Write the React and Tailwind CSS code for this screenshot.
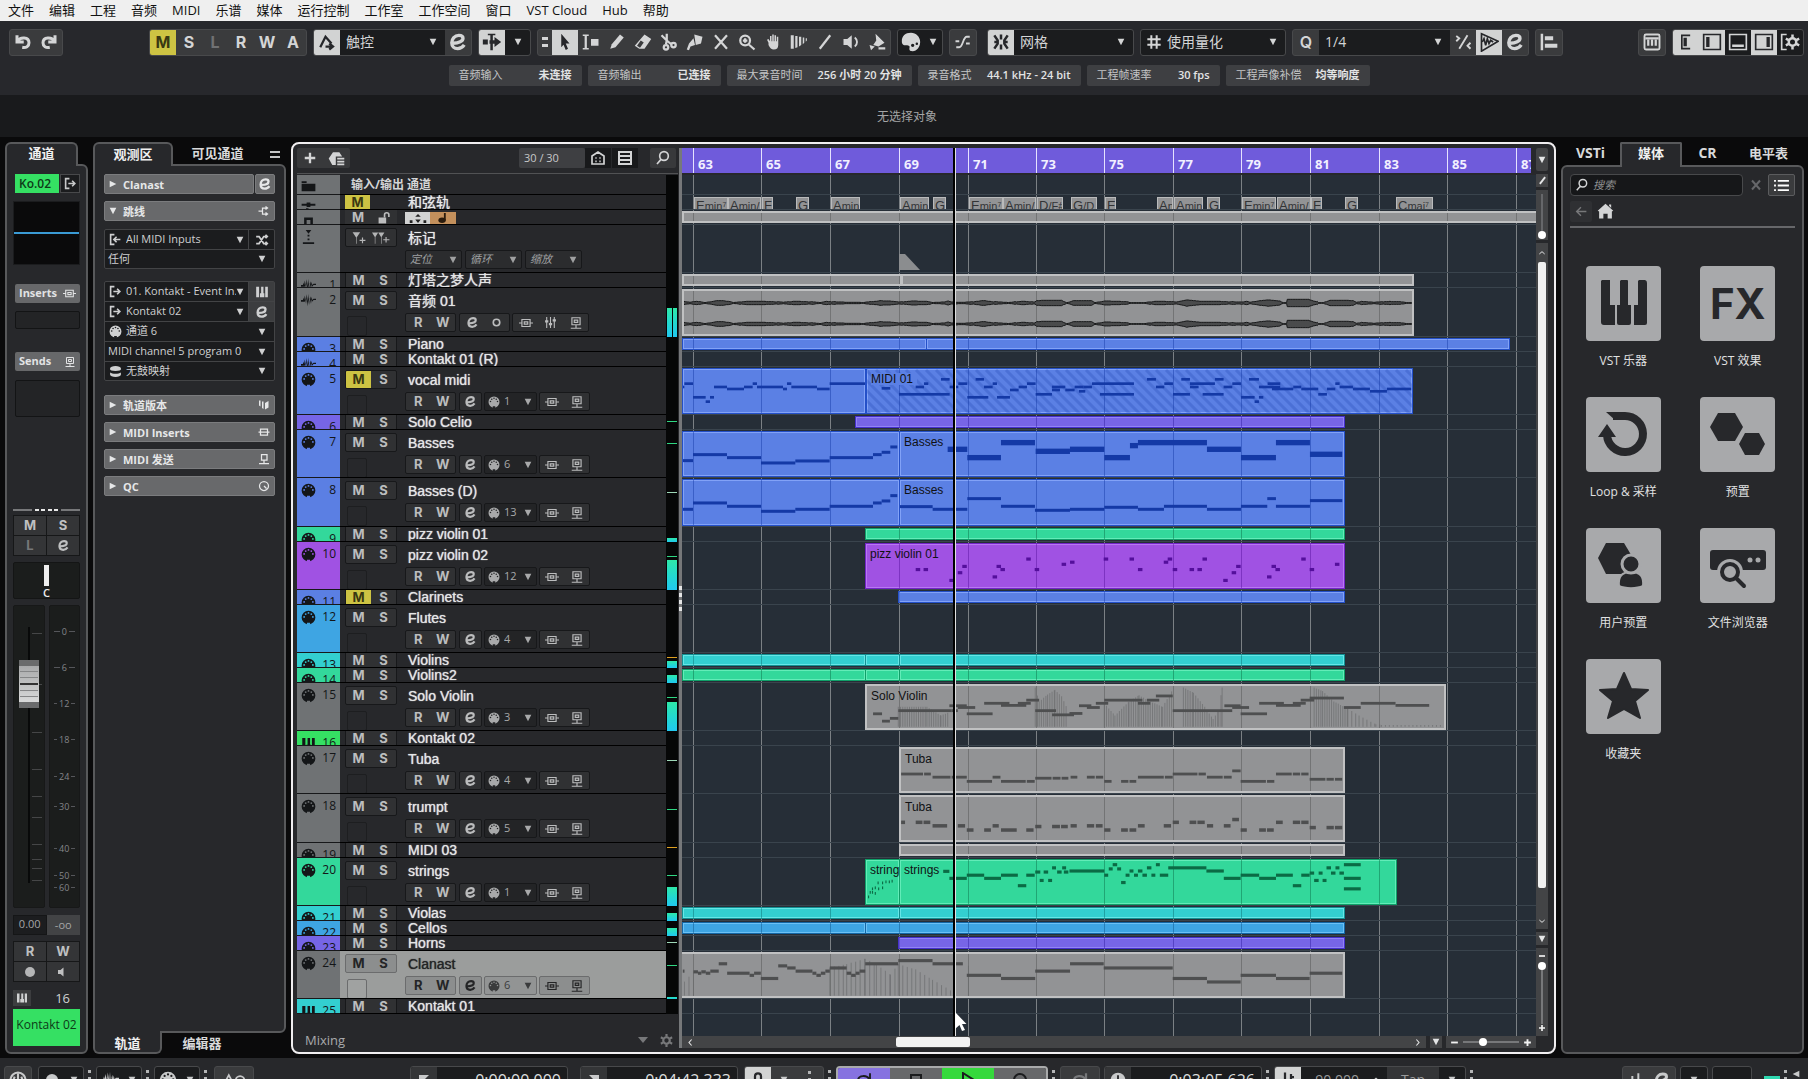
import React from "react";

/* ---------- icons ---------- */
const dot = (cx, cy, r) => `M${cx - r} ${cy}a${r} ${r} 0 1 0 ${2 * r} 0a${r} ${r} 0 1 0 ${-2 * r} 0z`;
const MIDI = dot(12, 12, 11) + [[5, 11], [7.5, 6.5], [12, 4.6], [16.5, 6.5], [19, 11]].map((p) => dot(p[0], p[1], 1.5)).join("") + "M9.5 23v-2.500h5v2.500z";

const fills = {
  midi: MIDI,
  piano: "M3 3h5v10h2v8H3zM11 3h3v10h-3zM10.800 14h3.600v7h-3.600zM16 3h5v18h-5.600v-8H16z",
  keys: "M2 3h5v18H2zM8.500 14h2V3h4v11h1.500v7H8.500zM17.500 3H22v18h-4.500z",
  folder: "M1 5h8v3H1zM1 9h22v12H1z",
  play: "M6 3l15 9-15 9z",
  cursor: "M7 1l11 13h-5l3 7-3 1.500-3-7-3 3.500z",
  pencil: "M3 21l2-6L16 2l5 4L10 19z",
  eraser: "M14 2l9 6-9 13H7l-6-4zM9 10l-5 7 4 2.500 5-7z",
  hand: "M6 13L4 9l2-1 2 3V4h2v7h1V2h2v9h1V3h2v8h1V5h2v11c0 4-2 6-6 6-3 0-5-2-7-6z",
  comp: "M1 3h4v18H1zM7 4h3v15l-3 1zM12 5h3v11l-3 2zM17 6h2v7l-2 2zM21 7h1.500v3L21 11.500z",
  bucket: "M10 1l12 12-8 5-7-2 4-6zM2 16l7 2-5 5zM14 19h9v3h-9z",
  glue: "M11 2l11 3-2 9-7 2zM10 7l2 9-6 2-2 5-3-1 3-8z",
  palette: "M12 1C5 1 1 5 1 11c0 4 2 5 5 5 4 0 5 1 4 4 0 2 1 3 4 3 5 0 9-5 9-11S18 1 12 1z" + dot(14, 16, 2) + dot(19, 14, 1.5),
  hex: "M7 2h10l6 10-6 10H7L1 12z",
  hexlist: "M7 3h9l4 6h-9v12H6L1 12zM13 11h10v2.500H13zM13 15h10v2.500H13zM13 19h10v2.500H13z",
  home: "M12 1l11 10-2 1v10h-6v-7H9v7H3V12l-2-1zM17 2h3v5l-3-3z",
  wave: "M0 11h3l1-4 1 4 1-7 2 9 1-11 2 11 1-12 1 13 2-9 1 6 1-5 1 5 2-2h4v2h-4l-2 3-1-4-1 7-2-8-1 10-1-9-1 11-2-12-1 8-1-6-1 3H0z",
  tempo: "M1 6h8v3H1zM15 6h8v3h-8zM9 4h6v7H9zM1 15h22v3H1zM8 13h4v7H8z",
  signature: "M5 4h14v17h-4V8H9v13H5z",
  drum: "M2 6a10 4 0 0 1 20 0v2a10 3 0 0 1-20 0zM2 14c4 3 16 3 20 0v4a10 4 0 0 1-20 0z",
  speaker: "M2 8h5l6-5v18l-6-5H2z",
  versions: "M2 3h3v12l-3-2zM8 5h3v15l-3-2zM14 8l7-4v13l-7 4z",
  fader: "M4 2h2v6h2v4H6v10H4V12H2V8h2zM11 2h2v11h2v4h-2v5h-2v-5H9v-4h2zM18 2h2v4h2v4h-2v12h-2V10h-2V6h2z",
};
const strokes = {
  undo: "M4 3v9h9M5 11C8 5 20 5 20 13c0 5-4 7-9 6",
  redo: "M20 3v9h-9M19 11C16 5 4 5 4 13c0 5 4 7 9 6",
  e: "M6 13.500C13 13.500 18 11 18 7.500 18 5 15.500 4 13 4 8 4 4.500 8 4.500 13c0 4.500 3 7 7 7 3.500 0 6-1.500 8-4.500",
  auto: "M3 19L10 5l8 9M10 18h8M15 14l5 4-5 4",
  cross: "M4 3l16 18M20 3L4 21",
  line: "M19 3L5 21",
  zoom: "M16 10a6.500 6.500 0 1 1-13 0a6.500 6.500 0 0 1 13 0M14 15l8 7M9.500 7v6M6.500 10h6",
  search: "M20 9a6.500 6.500 0 1 1-13 0a6.500 6.500 0 0 1 13 0M9 14l-6 7",
  scissors: "M2 3l7 7 6 5M9 1l0 9-1 5M21 16a3 3 0 1 1-6 0a3 3 0 0 1 6 0M11 19a3 3 0 1 1-6 0a3 3 0 0 1 6 0",
  curve: "M3 19h4c5 0 5-14 10-14h4M2 11h5M16 14h5",
  grid: "M8 2v20M16 2v20M2 8h20M2 16h20",
  route: "M10 3H3v18h7M8 12h11M15 7l5 5-5 5",
  routeIn: "M10 3H3v18h7M21 12H9M14 7l-5 5 5 5",
  shuffle: "M2 6h5l8 12h6M2 18h5l8-12h6M18 3l3 3-3 3M18 15l3 3-3 3",
  fork: "M1 12h8M9 12V6h8M9 12v6h8M15 3l4 3-4 3M15 15l4 3-4 3",
  insert: "M5 6h14v12H5zM0 12h5M19 12h5M9 10h6v4H9z",
  send: "M5 3h14v12H5zM9 7h6v4H9zM12 15v6M3 21h18",
  minsert: "M5 6h14v12H5zM1 12h22",
  msend: "M7 3h11v11H7zM12 14v6M2 21h20",
  qc: "M21 12a9 9 0 1 1-18 0a9 9 0 0 1 18 0M12 12l5 5",
  back: "M21 12H4M11 4l-8 8 8 8",
  circle: "M18 12a6 6 0 1 1-12 0a6 6 0 0 1 12 0",
  left: "M15 4l-7 8 7 8",
  right: "M9 4l7 8-7 8",
  up: "M4 15l8-7 8 7",
  down: "M4 9l8 7 8-7",
  plus: "M12 3v18M3 12h18",
  minus: "M3 12h18",
  rows: "M3 3h18v18H3zM3 9h18M3 15h18",
  house: "M3 9l9-6 9 6v12H3zM8 12h2M14 12h2M8 17h2M14 17h2",
};

function Icon({ n, size = 16, w = 3, className = "" }) {
  return (
    <svg viewBox="0 0 24 24" width={size} height={size} className={"shrink-0 " + className} aria-hidden="true">
      {fills[n] ? (
        <path d={fills[n]} fill="currentColor" fillRule="evenodd" />
      ) : (
        <path d={strokes[n]} fill="none" stroke="currentColor" strokeWidth={w} />
      )}
    </svg>
  );
}

function Tri({ dir = "down", className = "" }) {
  const d = { down: "M1 1h10L6 11z", right: "M1 1l10 5L1 11z" }[dir];
  return (
    <svg viewBox="0 0 12 12" width="8" height="8" className={"shrink-0 " + className} aria-hidden="true">
      <path d={d} fill="currentColor" />
    </svg>
  );
}

function Select({ label, value, tight, className = "", pad = "pl-1.5" }) {
  return (
    <span className={"relative flex items-center " + className}>
      <select aria-label={label} className={"h-full w-full min-w-0 appearance-none bg-transparent outline-none " + (tight ? "pr-3 " : "pr-5 ") + pad} defaultValue={value}>
        <option>{value}</option>
      </select>
      <Tri className={"pointer-events-none absolute " + (tight ? "right-1" : "right-2")} />
    </span>
  );
}

/* ---------- menu, toolbar, info line ---------- */
const menus = ["文件", "编辑", "工程", "音频", "MIDI", "乐谱", "媒体", "运行控制", "工作室", "工作空间", "窗口", "VST Cloud", "Hub", "帮助"];

function MenuBar() {
  return (
    <nav className="flex h-[21px] shrink-0 items-center gap-[15px] bg-[#efefef] pl-2 text-[13px] leading-none text-[#111]">
      {menus.map((m) => (
        <button key={m} className="whitespace-nowrap">{m}</button>
      ))}
    </nav>
  );
}

function Group({ children, dark, className = "" }) {
  return (
    <div className={"flex h-[27px] shrink-0 overflow-hidden rounded-[3px] border border-[#48494b] " + (dark ? "bg-[#1b1c1e] " : "bg-[#3a3b3d] ") + className}>
      {children}
    </div>
  );
}

function Tool({ n, label, on, w, size = 18, children }) {
  return (
    <button aria-label={label} className={"flex w-[26px] shrink-0 items-center justify-center " + (on ? "bg-[#d2d3d3] text-[#26272a]" : "")}>
      {children || <Icon n={n} size={size} w={w} />}
    </button>
  );
}

const letters = ["M", "S", "L", "R", "W", "A"];
const tools = ["pencil", "eraser", "scissors", "glue", "cross", "zoom", "hand", "comp", "line"];

function Toolbar() {
  return (
    <div className="flex h-[34px] items-center gap-1.5 pl-[9px] pr-1 text-[#d4d5d6]">
      <Group className="mr-20">
        <Tool n="undo" label="撤销" w={4} />
        <Tool n="redo" label="重做" w={4} />
      </Group>
      <Group>
        {letters.map((l) => (
          <button key={l} className={"w-[26px] font-['Inter'] text-base font-bold leading-none " + (l === "M" ? "bg-[#cdc343] text-[#3a3812]" : l === "L" ? "text-[#707173]" : "")}>
            {l}
          </button>
        ))}
      </Group>
      <Group>
        <Tool n="auto" label="自动化" on w={3} />
        <Select label="自动化模式" value="触控" className="w-[105px] bg-[#1b1c1e] text-sm" />
        <Tool n="e" label="自动化面板" size={20} w={4} />
      </Group>
      <Group dark>
        <Tool label="自动滚动" on>
          <svg viewBox="0 0 24 24" width="20" height="20"><path d="M1 9h6v6H1zM15 6l8 6-8 6v-4h-6v-4h6zM10 2h3v20h-3zM7 2h9v2H7z" fill="currentColor" /></svg>
        </Tool>
        <button aria-label="自动滚动选项" className="flex w-[25px] items-center justify-center"><Tri /></button>
      </Group>
      <Group>
        <span className="flex w-3.5 flex-col items-center justify-center gap-1">
          <span className="h-[3px] w-1.5 bg-[#d4d5d6]" />
          <span className="h-[3px] w-1.5 bg-[#d4d5d6]" />
        </span>
        <Tool n="cursor" label="选择" on />
        <Tool label="范围">
          <svg viewBox="0 0 24 24" width="18" height="18"><path d="M1 2h8v2H6.500v16H9v2H1v-2h2.500V4H1zM12 8h10v9H12z" fill="currentColor" /></svg>
        </Tool>
        {tools.map((t) => (
          <Tool key={t} n={t} label={t} />
        ))}
        <Tool label="播放">
          <svg viewBox="0 0 24 24" width="18" height="18"><path d={fills.speaker} fill="currentColor" /><path d="M17 6c4 3 4 9 0 12" fill="none" stroke="currentColor" strokeWidth="2.500" /></svg>
        </Tool>
        <Tool n="bucket" label="颜色" />
      </Group>
      <Group dark>
        <button aria-label="调色板" className="flex w-[26px] items-center justify-center"><Icon n="palette" size={20} /></button>
        <button aria-label="颜色选项" className="flex w-[18px] items-center justify-center"><Tri /></button>
      </Group>
      <Group><Tool n="curve" label="曲线" w={2.5} /></Group>
      <Group dark className="ml-1">
        <Tool label="吸附" on>
          <svg viewBox="0 0 24 24" width="20" height="20"><path d="M12 3v6M12 15v6M4 4l4 6v4l-4 6M20 4l-4 6v4l4 6M4 12h4M16 12h4" fill="none" stroke="currentColor" strokeWidth="3" /></svg>
        </Tool>
        <Select label="吸附类型" value="网格" className="w-[119px] text-sm" />
      </Group>
      <Group dark>
        <span className="flex w-[26px] items-center justify-center"><Icon n="grid" size={16} /></span>
        <Select label="网格类型" value="使用量化" className="w-[118px] text-sm" pad="pl-0" />
      </Group>
      <Group>
        <span className="flex w-[26px] items-center justify-center font-['Inter'] text-base font-semibold">Q</span>
        <Select label="量化预设" value="1/4" className="w-[131px] bg-[#1b1c1e] text-sm" />
        <Tool label="软量化">
          <svg viewBox="0 0 24 24" width="18" height="18"><path d="M18 3L7 21M3 4l4 3-4 4M22 13l-4 4 4 4" fill="none" stroke="currentColor" strokeWidth="2.500" /></svg>
        </Tool>
        <Tool label="音频量化" on>
          <svg viewBox="0 0 24 24" width="20" height="20"><path d="M3 2l20 9L3 23z" fill="none" stroke="currentColor" strokeWidth="2" /><path d="M4 12l2-4 2 8 2-8 2 6 2-4 3 2" fill="none" stroke="currentColor" strokeWidth="2" /></svg>
        </Tool>
        <Tool n="e" label="量化面板" size={20} w={4} />
      </Group>
      <Group>
        <Tool label="对齐">
          <svg viewBox="0 0 24 24" width="20" height="20"><path d="M2 2h3v20H2zM7 5h10v5H7zM7 14h15v5H7z" fill="currentColor" /></svg>
        </Tool>
      </Group>
      <Group className="ml-auto">
        <Tool label="键盘">
          <svg viewBox="0 0 24 24" width="18" height="18"><path d="M4 2h16a2 2 0 0 1 2 2v16a2 2 0 0 1-2 2H4a2 2 0 0 1-2-2V4a2 2 0 0 1 2-2z" fill="none" stroke="currentColor" strokeWidth="2.500" /><path d="M3 7h18M7 9v8M12 9v8M17 9v8" stroke="currentColor" strokeWidth="3" /></svg>
        </Tool>
      </Group>
      <Group dark>
        <Tool label="左区边栏" on><svg viewBox="0 0 24 24" width="20" height="20"><path d="M17 4H7v16h10" fill="none" stroke="currentColor" strokeWidth="2" /><path d="M9 7h4v10H9z" fill="currentColor" /></svg></Tool>
        <Tool label="左区" on><svg viewBox="0 0 24 24" width="20" height="20"><path d="M2 3h20v18H2z" fill="none" stroke="currentColor" strokeWidth="2" /><path d="M5 6h4v12H5z" fill="currentColor" /></svg></Tool>
        <Tool label="下区"><svg viewBox="0 0 24 24" width="20" height="20"><path d="M2 3h20v18H2z" fill="none" stroke="currentColor" strokeWidth="2" /><path d="M5 15h14v3H5z" fill="currentColor" /></svg></Tool>
        <Tool label="右区" on><svg viewBox="0 0 24 24" width="20" height="20"><path d="M2 3h20v18H2z" fill="none" stroke="currentColor" strokeWidth="2" /><path d="M15 6h4v12h-4z" fill="currentColor" /></svg></Tool>
        <Tool label="设置窗口布局"><svg viewBox="0 0 24 24" width="20" height="20"><path d="M8 3H2v18h6" fill="none" stroke="currentColor" strokeWidth="2" /><circle cx="15" cy="12" r="4.500" fill="none" stroke="currentColor" strokeWidth="3" /><path d="M15 3v4M15 17v4M7 8l4 2M23 8l-4 2M7 16l4-2M23 16l-4-2" stroke="currentColor" strokeWidth="3" /></svg></Tool>
      </Group>
    </div>
  );
}

const info = [
  ["音频输入", "未连接", "w-[133px]"],
  ["音频输出", "已连接", "w-[133px]"],
  ["最大录音时间", "256 小时 20 分钟", "w-[185px]"],
  ["录音格式", "44.1 kHz - 24 bit", "w-[163px]"],
  ["工程帧速率", "30 fps", "w-[133px]"],
  ["工程声像补偿", "均等响度", "w-[144px]"],
];

function InfoLine() {
  return (
    <dl className="flex items-start justify-center gap-1.5 pl-2.5 pt-1.5 text-[11px]">
      {info.map(([k, v, w]) => (
        <div key={k} className={"flex h-[21px] items-center justify-between whitespace-nowrap rounded-xs bg-[#3e3f42] px-2.5 " + w}>
          <dt className="text-[#c4c5c6]">{k}</dt>
          <dd className="font-semibold text-[#e2e3e4]">{v}</dd>
        </div>
      ))}
    </dl>
  );
}

/* ---------- channel strip ---------- */
const scale = [["0", 9], ["6", 21], ["12", 33], ["18", 45], ["24", 57], ["30", 67], ["40", 81], ["50", 90], ["60", 94]];
const faderTicks = [9, 26, 42, 54, 63, 70, 79, 84, 87, 91];

function StripButton({ children, dim, label }) {
  return (
    <button aria-label={label} className={"flex h-[19px] items-center justify-center bg-[#343537] font-['Inter'] text-[13px] font-bold leading-none " + (dim ? "text-[#77787a]" : "text-[#bfc0c1]")}>
      {children}
    </button>
  );
}

function ChannelStrip() {
  return (
    <section className="flex w-[83px] shrink-0 flex-col">
      <button className="relative z-10 -mb-0.5 h-6 w-[73px] rounded-t-md border-2 border-b-0 border-[#58595b] bg-[#27282b] pb-1 text-[13px] font-bold leading-none text-[#f0f0f0]">通道</button>
      <div className="flex min-h-0 flex-1 flex-col rounded-md rounded-tl-none border-2 border-[#58595b] bg-[#27282b] px-1.5 pb-1.5 pt-2">
        <div className="ml-0.5 flex h-[19px] gap-px">
          <button className="w-11 bg-[#35e063] pl-1 text-left text-xs font-semibold leading-none text-[#0d3a18]">Ko.02</button>
          <button aria-label="输出路由" className="flex flex-1 items-center justify-center border border-[#48494b] bg-[#1b1c1e] text-[#c8c9ca]"><Icon n="route" size={13} /></button>
        </div>
        <div className="mt-2 flex h-16 items-center border border-[#1b1c1e] bg-[#0a0a0b]">
          <span className="h-0.5 w-full bg-[#3a9ad4]" />
        </div>
        <button className="ml-0.5 mt-[19px] flex h-[19px] items-center justify-between rounded-xs bg-[#67686a] px-1 text-[11px] font-bold text-[#e2e3e4]">
          Inserts <Icon n="insert" size={13} w={2} />
        </button>
        <div className="ml-0.5 mt-2 h-[18px] rounded-xs border border-[#131415] bg-[#232426]" />
        <button className="ml-0.5 mt-[23px] flex h-[19px] items-center justify-between rounded-xs bg-[#67686a] px-1 text-[11px] font-bold text-[#e2e3e4]">
          Sends <Icon n="send" size={12} w={2} />
        </button>
        <div className="ml-0.5 mt-[9px] h-[37px] rounded-xs border border-[#131415] bg-[#232426]" />
        <div className="mt-[92px] flex items-center justify-between">
          <span className="h-0.5 w-[19px] bg-[#77787a]" />
          {[0, 1, 2, 3].map((i) => (
            <span key={i} className="h-0.5 w-1 bg-[#e8e8e8]" />
          ))}
          <span className="h-0.5 w-[19px] bg-[#77787a]" />
        </div>
        <div className="mt-1 grid grid-cols-2 gap-px bg-[#161718] p-px">
          <StripButton>M</StripButton>
          <StripButton>S</StripButton>
          <StripButton dim>L</StripButton>
          <StripButton label="编辑通道"><Icon n="e" size={13} w={4} /></StripButton>
        </div>
        <div className="mt-1.5 flex h-[37px] flex-col items-center rounded-xs border border-[#141515] bg-[#1b1d1c] pt-0.5 text-[11px] font-semibold leading-none text-[#eee]">
          <span className="mb-px h-[21px] w-[5px] bg-[#eee]" />C
        </div>
        <div className="mt-1.5 flex min-h-0 flex-1 gap-1">
          <div className="relative flex-1 rounded-xs border border-[#171818] bg-[#1b1d1c]">
            <span className="absolute left-[14px] top-[7%] h-[85%] w-0.5 bg-[#080909]" />
            {faderTicks.map((t) => (
              <span key={t} className="absolute right-0.5 h-px w-2.5 bg-[#454647]" style={{ top: t + "%" }} />
            ))}
            <button aria-label="音量推子" className="absolute left-[5px] top-[18%] flex h-12 w-5 flex-col justify-evenly border-y-[6px] border-[#6a6b6c] bg-gradient-to-b from-[#a9aaab] to-[#d8d9d9] px-px">
              {[0, 1].map((i) => <span key={i} className="h-px w-full bg-[#858687]" />)}
              <span className="h-0.5 w-full bg-[#333]" />
              {[0, 1].map((i) => <span key={i} className="h-px w-full bg-[#858687]" />)}
            </button>
          </div>
          <div className="relative flex-1 rounded-xs border border-[#171818] bg-[#1b1d1c] text-[9px] leading-none text-[#85868a]">
            {scale.map(([n, t]) => (
              <span key={n} className="absolute inset-x-1 -mt-1.5 flex items-center gap-0.5" style={{ top: t + "%" }}>
                <span className="h-px flex-1 bg-[#55565a]" />{n}<span className="h-px flex-1 bg-[#55565a]" />
              </span>
            ))}
          </div>
        </div>
        <div className="mt-[7px] grid h-5 grid-cols-2 text-[11px] leading-5 text-[#a5a6a7]">
          <span className="border border-[#151617] bg-[#1c1d1f] text-center leading-4">0.00</span>
          <span className="bg-[#424345] text-center">-oo</span>
        </div>
        <div className="mt-1.5 grid grid-cols-2 gap-px bg-[#161718] p-px">
          <StripButton>R</StripButton>
          <StripButton>W</StripButton>
          <StripButton label="录音"><span className="h-2.5 w-2.5 rounded-full bg-[#b5b6b7]" /></StripButton>
          <StripButton label="监听"><Icon n="speaker" size={12} /></StripButton>
        </div>
        <div className="mt-2 flex h-4 items-center justify-between pr-2.5 text-[13px] leading-none text-[#d0d1d2]">
          <span className="flex h-4 w-[18px] items-center justify-center bg-[#3c3d3f]"><Icon n="keys" size={12} /></span>16
        </div>
        <button className="mt-[3px] flex h-[37px] shrink-0 items-start justify-center whitespace-nowrap bg-[#35e063] pt-2 text-xs leading-4 text-[#0d3a18]">Kontakt 02</button>
      </div>
    </section>
  );
}

/* ---------- inspector ---------- */
function Bar({ title, icon, open, split }) {
  return (
    <div className="flex h-5 gap-px text-[11px] text-[#e6e7e8]">
      <button className="flex flex-1 items-center gap-1.5 rounded-xs border border-[#7b7c7e] bg-[#68696b] px-1 font-bold leading-none">
        <Tri dir={open ? "down" : "right"} />
        <span className="flex-1 text-left">{title}</span>
        {!split && <Icon n={icon} size={12} w={2.5} />}
      </button>
      {split && (
        <button aria-label="编辑通道设置" className="flex w-5 items-center justify-center rounded-xs border border-[#7b7c7e] bg-[#68696b]">
          <Icon n="e" size={14} w={4} />
        </button>
      )}
    </div>
  );
}

function Slot({ icon, value, side, sideOn, last }) {
  return (
    <div className={"flex items-center " + (last ? "h-[18px]" : "h-5 border-b border-[#434446]")}>
      {icon && <Icon n={icon} size={13} className="ml-1" w={3} />}
      <Select label={value} value={value} tight={!!side} className="h-full min-w-0 flex-1" pad={icon ? "pl-1" : "pl-[3px]"} />
      {side && (
        <button aria-label={side} className={"flex h-full w-[26px] items-center justify-center border-l border-[#434446] " + (sideOn ? "bg-[#3c3d3f]" : "")}>
          <Icon n={side} size={14} w={side === "e" ? 4 : 3} />
        </button>
      )}
    </div>
  );
}

function Inspector() {
  return (
    <section className="flex w-[193px] shrink-0 flex-col">
      <div className="flex h-[22px] shrink-0 items-start text-[13px] font-bold leading-none text-[#d8d9da]">
        <button className="relative z-10 h-6 w-20 rounded-t-md border-2 border-b-0 border-[#58595b] bg-[#27282b] pb-0.5 text-[#f0f0f0]">观测区</button>
        <button className="h-6 flex-1 pb-0.5 pr-2">可见通道</button>
        <button aria-label="面板菜单" className="mr-1.5 flex h-6 w-2.5 flex-col justify-center gap-[3px]">
          <span className="h-0.5 w-full bg-[#c4c5c6]" />
          <span className="h-0.5 w-full bg-[#c4c5c6]" />
        </button>
      </div>
      <div className="flex min-h-0 flex-1 flex-col rounded-md rounded-bl-none rounded-tl-none border-2 border-[#58595b] bg-[#27282b] px-[9px] pt-2 text-[11px] text-[#cfd0d1]">
        <div className="flex flex-col gap-[7px]">
          <Bar title="Clanast" split />
          <Bar title="跳线" icon="fork" open />
        </div>
        <div className="mt-2 rounded-xs border border-[#434446] bg-[#1b1c1e]">
          <Slot icon="routeIn" value="All MIDI Inputs" side="shuffle" />
          <Slot value="任何" last />
        </div>
        <div className="mt-3 rounded-xs border border-[#434446] bg-[#1b1c1e]">
          <Slot icon="route" value="01. Kontakt - Event In." side="keys" sideOn />
          <Slot icon="route" value="Kontakt 02" side="e" sideOn />
          <Slot icon="midi" value="通道 6" />
          <Slot value="MIDI channel 5 program 0" />
          <Slot icon="drum" value="无鼓映射" last />
        </div>
        <div className="mt-3.5 flex flex-col gap-[7px]">
          <Bar title="轨道版本" icon="versions" />
          <Bar title="MIDI Inserts" icon="minsert" />
          <Bar title="MIDI 发送" icon="msend" />
          <Bar title="QC" icon="qc" />
        </div>
      </div>
      <div className="flex h-[21px] shrink-0 text-[13px] font-bold leading-none text-[#d8d9da]">
        <button className="relative z-10 -mt-0.5 w-[69px] rounded-b-md border-2 border-t-0 border-[#58595b] bg-[#27282b] pt-1 text-[#f0f0f0]">轨道</button>
        <button className="w-20">编辑器</button>
      </div>
    </section>
  );
}

/* ---------- tracks ---------- */
const G = "grey", B = "blue", V = "violet", P = "purple", N = "green", C = "cyan", S = "sky", K = "lime";
const heads = {
  grey: "bg-[#6f7274]", blue: "bg-[#5b7fe3]", violet: "bg-[#7665e6]", purple: "bg-[#a052e3]",
  green: "bg-[#33d89b]", cyan: "bg-[#33cfd0]", sky: "bg-[#3ea5e3]", lime: "bg-[#35e063]",
};
const clipLook = {
  grey: ["bg-[#929395] border-2 border-[#c0c1c2]", "#4e4f50"],
  blue: ["bg-[#5b80e4] border border-[#2450c8] shadow-[inset_0_0_0_1px_#82a2f7]", "#1439a6"],
  violet: ["bg-[#7765e6] border border-[#4630cc] shadow-[inset_0_0_0_1px_#9283f5]", "#2c1a9c"],
  purple: ["bg-[#a052e3] border border-[#7424c8] shadow-[inset_0_0_0_1px_#b877f2]", "#540f9c"],
  green: ["bg-[#33d89b] border border-[#0f9f68] shadow-[inset_0_0_0_1px_#62ecb8]", "#0b6b45"],
  cyan: ["bg-[#33cfd0] border border-[#138f92] shadow-[inset_0_0_0_1px_#66e6e6]", "#0b6b6d"],
  sky: ["bg-[#3ea5e3] border border-[#1467a5] shadow-[inset_0_0_0_1px_#6cc1f5]", "#0d5186"],
};

/* note tables: [start, end, pitch row]; each table is scaled onto the timeline by its view */
const UPPER = "translate(-2 -35) scale(0.3333)";
const LOWER = "translate(-2 355) scale(0.5612 0.3501)";

const vocal = [[6,13,741],[13,39,731],[39,77,772],[77,90,785],[90,102,772],[102,141,741],[141,192,747],[192,218,741],[218,231,731],[231,309,741],[309,321,747],[321,334,731],[334,411,741],[411,449,747],[449,556,731],[605,631,745],[707,732,741],[732,745,731],[657,809,763],[783,809,718],[809,835,741],[835,862,731],[862,925,772],[887,912,718],[912,938,741],[938,951,731],[951,990,772],[990,1016,750],[1016,1041,741],[1041,1067,731],[1067,1116,763],[1116,1156,741],[1116,1140,750],[1156,1184,750],[1184,1210,741],[1197,1216,754],[1210,1236,741],[1236,1362,731],[1260,1362,763],[1401,1428,718],[1428,1453,741],[1453,1479,731],[1479,1530,763],[1504,1530,718],[1530,1556,741],[1530,1605,731],[1568,1631,763],[1605,1631,718],[1631,1657,741],[1657,1683,731],[1683,1724,772],[1724,1737,785],[1737,1750,772],[1707,1737,718],[1737,1801,741],[1763,1801,731],[1776,1840,747],[1840,1864,741],[1864,1915,747],[1915,1941,763],[1941,1966,747],[1966,1979,731],[1979,2019,741],[2019,2070,747],[2070,2121,754],[2121,2194,747]];
const bassA = [[6,39,962],[39,141,944],[141,243,953],[243,346,969],[346,449,963],[449,579,953],[579,605,944],[605,631,937],[631,652,921]];
const bassB = [[803,862,928],[862,963,953],[963,1065,908],[1067,1170,934],[1170,1273,928],[1273,1350,953],[1350,1374,917],[1374,1581,908],[1581,1683,928],[1683,1788,953],[1788,1890,908],[1890,1987,943]];
const bassC = [[6,39,1108],[39,141,1089],[141,243,1099],[243,346,1114],[346,449,1108],[449,579,1099],[579,605,1089],[605,631,1083],[631,652,1067],[658,758,1100],[758,862,1108],[862,963,1076],[963,1065,1099],[1065,1170,1111],[1170,1273,1108],[1273,1374,1102],[1374,1452,1108],[1452,1581,1099],[1581,1683,1108],[1683,1762,1099],[1762,1788,1076],[1788,1890,1099],[1890,1987,1082]];
const pizz = [[424,113],[438,113],[484,144],[499,122],[507,104],[561,134],[568,104],[575,113],[621,83],[636,113],[684,98],[699,92],[759,83],[805,83],[820,113],[866,92],[873,83],[882,113],[912,113],[926,113],[935,83],[972,144],[987,122],[995,104],[1050,134],[1058,104],[1065,113],[1111,83],[1126,113],[1171,98]].map(([x, y]) => [x - 4, x + 4, y]);
const solo = [[344,360,525],[360,374,546],[374,389,538],[389,484,516],[480,511,502],[484,495,516],[495,526,507],[511,557,525],[542,587,495],[572,617,501],[602,625,495],[617,640,486],[633,670,516],[663,702,528],[694,717,524],[711,733,502],[725,748,507],[741,763,495],[756,824,486],[816,838,495],[832,854,486],[848,878,474],[878,984,516],[970,999,502],[984,1014,507],[999,1046,525],[1032,1076,495],[1062,1106,501],[1092,1115,495],[1106,1130,486],[1122,1183,480],[1183,1213,507],[1213,1275,495],[1275,1335,501]];
const clan = [[5,8,1260],[24,32,1262],[32,38,1266],[38,46,1262],[46,54,1266],[54,69,1260],[69,84,1239],[84,124,1266],[124,132,1272],[132,144,1266],[144,175,1281],[175,191,1245],[191,206,1251],[206,236,1260],[236,243,1266],[243,251,1272],[251,259,1266],[259,267,1260],[267,297,1251],[297,305,1266],[305,313,1272],[313,320,1266],[320,330,1260],[330,389,1239],[389,450,1230],[450,504,1239],[511,572,1272],[572,633,1281],[633,695,1260],[695,755,1239],[755,878,1251],[878,939,1281],[939,999,1291],[999,1062,1272],[1062,1122,1281],[1122,1180,1266]];
const tuba = [[394,433,697],[435,447,697],[450,482,706],[484,511,706],[511,556,718],[557,571,706],[572,616,718],[618,632,718],[633,662,709],[664,678,709],[680,692,709],[696,708,706],[725,739,706],[741,754,706],[756,769,718],[786,799,718],[801,813,718],[816,862,706],[864,878,706],[878,922,697],[924,937,697],[939,967,706],[969,983,706],[984,999,688],[999,1044,718],[1046,1059,718],[1062,1090,697],[1092,1105,697],[1107,1120,697],[1122,1150,712],[1152,1165,712],[1167,1180,712]];
const trumpet = [[394,401,835],[420,432,835],[434,446,835],[450,476,845],[495,508,845],[511,523,857],[542,554,857],[557,568,845],[572,600,857],[617,630,857],[633,644,847],[663,677,847],[679,691,847],[696,707,845],[725,738,845],[741,753,845],[756,767,857],[786,798,857],[801,813,857],[816,828,845],[862,875,845],[878,889,835],[908,920,835],[922,935,835],[939,950,845],[969,981,845],[984,996,827],[999,1010,857],[1032,1044,857],[1046,1058,857],[1062,1074,835],[1092,1105,835],[1107,1120,835],[1122,1133,850],[1152,1165,850],[1167,1180,850]];
const strings = [[469,480,975],[480,511,995],[511,542,986],[542,572,995],[572,602,986],[602,617,1016],[617,632,986],[633,642,977],[641,648,1001],[648,656,977],[656,663,1001],[663,670,965],[672,680,977],[681,688,965],[684,692,977],[694,756,974],[756,763,986],[764,771,968],[771,779,956],[779,786,968],[786,794,1007],[794,801,986],[801,808,974],[809,816,986],[816,824,974],[824,832,986],[832,840,965],[840,847,986],[848,855,956],[855,870,986],[870,938,965],[938,969,974],[969,999,995],[999,1032,986],[1032,1062,995],[1062,1092,986],[1092,1107,1016],[1107,1122,986],[1122,1130,980],[1130,1138,1001],[1138,1145,980],[1145,1152,1001],[1152,1160,965],[1160,1168,980],[1168,1175,965],[1175,1183,980],[1183,1213,956],[1183,1213,995],[1183,1213,1025]];
const runUp = [[335,1048],[338,1035],[342,1025],[342,1035],[347,1022],[347,1038],[352,1008],[353,1025],[360,1008],[360,1022],[366,1005],[372,1005],[377,1003]].map(([x, y]) => [x, x + 2, y]);

/* controller curves: runs of [x, top] drawn as vertical strokes down to a floor */
const soloCC = { floor: 562, step: 4, runs: [[[389,505],[440,505],[465,530],[480,520]], [[633,450],[640,490],[655,470],[668,457],[680,475],[690,510]], [[756,495],[775,530],[800,490],[818,472],[838,490],[860,505],[878,455]], [[897,450],[915,465],[935,505],[950,540],[960,515],[966,450],[970,450]], [[1130,450],[1145,460],[1165,490],[1190,510]]] };
const soloTail = { floor: 562, step: 7, runs: [[[1190,510],[1210,530],[1240,555],[1250,557],[1360,557]]] };
const clanCC = { floor: 1330, step: 8, runs: [[[8,1290],[31,1250]], [[267,1250],[297,1240],[330,1225],[350,1240],[375,1270],[389,1240],[420,1255],[450,1285],[490,1322]], [[514,1245],[521,1250]]] };

function strokesOf({ floor, step, runs }) {
  let d = "";
  runs.forEach((pts) => {
    for (let i = 0; i < pts.length - 1; i++) {
      const [x0, y0] = pts[i], [x1, y1] = pts[i + 1];
      for (let x = x0; x < x1; x += step) d += `M${x} ${floor}V${Math.round(y0 + ((y1 - y0) * (x - x0)) / (x1 - x0))}`;
    }
  });
  return d;
}

const envelope = [[6,8],[30,3],[50,8],[75,2],[110,12],[125,12],[150,7],[160,2],[200,8],[240,9],[290,6],[310,3],[345,9],[400,5],[420,2],[440,8],[475,4],[550,2],[600,11],[640,9],[655,4],[700,10],[740,8],[760,2],[790,4],[805,10],[815,4],[850,3],[880,6],[910,12],[940,6],[985,2],[1030,9],[1065,4],[1070,12],[1145,13],[1160,1],[1180,11],[1235,11],[1245,2],[1275,10],[1340,7],[1350,1],[1395,2],[1430,9],[1475,7],[1490,6],[1520,15],[1560,9],[1620,8],[1680,4],[1700,8],[1710,3],[1740,11],[1765,15],[1800,10],[1810,2],[1820,2],[1822,14],[1890,14],[1912,6],[1915,2],[1930,2],[1950,13],[2020,12],[2030,3],[2045,8],[2070,6],[2080,3],[2130,8],[2170,6],[2180,1],[2198,1]];
function waveform(mid) {
  const up = [], down = [];
  for (let i = 0; i < envelope.length - 1; i++) {
    const [x0, a0] = envelope[i], [x1, a1] = envelope[i + 1];
    for (let x = x0; x < x1; x += 5) {
      const a = (a0 + ((a1 - a0) * (x - x0)) / (x1 - x0)) * 0.7;
      const j = a > 4 ? ((x * 7) % 5) - 2 : 0;
      up.push(`${x},${Math.round(mid - a - j / 2)}`);
      down.unshift(`${x},${Math.round(mid + a + j / 2)}`);
    }
  }
  return up.concat(down).join(" ");
}

const tracks = [
  { kind: "io", h: 20, color: G, icon: "folder", name: "输入/输出 通道" },
  { kind: "chord", h: 15, color: G, icon: "tempo", name: "和弦轨" },
  { kind: "transpose", h: 15, color: G, icon: "signature", clips: [{ a: 0, b: 860 }] },
  { kind: "marker", h: 48, color: G, name: "标记" },
  { n: 1, h: 15, color: G, icon: "wave", name: "灯塔之梦人声", clips: [{ a: 0, b: 220 }, { a: 219, b: 732 }] },
  { n: 2, h: 49, color: G, icon: "wave", name: "音频 01", audio: true, bar: 29, clips: [{ a: 0, b: 732, wave: true }] },
  { n: 3, h: 15, color: B, name: "Piano", clips: [{ a: 0, b: 245 }, { a: 244, b: 828 }] },
  { n: 4, h: 15, color: B, icon: "wave", name: "Kontakt 01 (R)" },
  { n: 5, h: 48, color: B, name: "vocal midi", ch: 1, mute: true, clips: [{ a: 0, b: 184, notes: vocal, view: UPPER, t: 8 }, { a: 184, b: 731, label: "MIDI 01", hatch: true, notes: vocal, view: UPPER, t: 8 }] },
  { n: 6, h: 15, color: V, name: "Solo Celio", peak: 6, clips: [{ a: 173, b: 663 }] },
  { n: 7, h: 48, color: B, name: "Basses", ch: 6, peak: 13, clips: [{ a: 0, b: 218, notes: bassA, view: UPPER, t: 9 }, { a: 217, b: 663, label: "Basses", notes: bassB, view: UPPER, t: 16 }] },
  { n: 8, h: 49, color: B, name: "Basses (D)", ch: 13, peak: 14, pale: true, clips: [{ a: 0, b: 218, notes: bassC, view: UPPER, t: 9 }, { a: 217, b: 663, label: "Basses", notes: bassC, view: UPPER, t: 9 }] },
  { n: 9, h: 15, color: N, name: "pizz violin 01", bar: 4, clips: [{ a: 183, b: 663 }] },
  { n: 10, h: 48, color: P, name: "pizz violin 02", ch: 12, peak: 14, bar: 30, clips: [{ a: 183, b: 663, label: "pizz violin 01", notes: pizz, view: LOWER, t: 9 }] },
  { n: 11, h: 15, color: B, name: "Clarinets", mute: true, clips: [{ a: 216, b: 663 }] },
  { n: 12, h: 48, color: S, name: "Flutes", ch: 4 },
  { n: 13, h: 15, color: C, name: "Violins", peak: 4, hot: true, bar: 7, clips: [{ a: 0, b: 184 }, { a: 183, b: 218 }, { a: 217, b: 663 }] },
  { n: 14, h: 15, color: N, name: "Violins2", bar: 8, clips: [{ a: 0, b: 184 }, { a: 183, b: 218 }, { a: 217, b: 663 }] },
  { n: 15, h: 48, color: G, name: "Solo Violin", ch: 3, peak: 14, bar: 29, clips: [{ a: 183, b: 764, label: "Solo Violin", notes: solo, cc: [soloCC, soloTail], view: LOWER, t: 8 }] },
  { n: 16, h: 15, color: K, icon: "keys", name: "Kontakt 02" },
  { n: 17, h: 48, color: G, name: "Tuba", ch: 4, peak: 14, pale: true, clips: [{ a: 217, b: 663, label: "Tuba", notes: tuba, view: LOWER, t: 8 }] },
  { n: 18, h: 49, color: G, name: "trumpt", ch: 5, peak: 15, clips: [{ a: 217, b: 663, label: "Tuba", notes: trumpet, view: LOWER, t: 10 }] },
  { n: 19, h: 15, color: G, name: "MIDI 03", peak: 4, hot: true, clips: [{ a: 217, b: 663 }] },
  { n: 20, h: 48, color: N, name: "strings", ch: 1, peak: 17, bar: 19, clips: [{ a: 183, b: 218, label: "string", notes: runUp, view: LOWER, t: 8 }, { a: 217, b: 715, label: "strings", notes: strings, view: LOWER, t: 9 }] },
  { n: 21, h: 15, color: C, name: "Violas", bar: 8, clips: [{ a: 0, b: 218 }, { a: 217, b: 663 }] },
  { n: 22, h: 15, color: S, name: "Cellos", bar: 8, clips: [{ a: 0, b: 184 }, { a: 183, b: 663 }] },
  { n: 23, h: 15, color: V, name: "Horns", peak: 6, pale: true, clips: [{ a: 216, b: 663 }] },
  { n: 24, h: 48, color: G, name: "Clanast", ch: 6, selected: true, peak: 14, bar: 2, clips: [{ a: -2, b: 663, notes: clan, cc: [clanCC], view: LOWER, t: 9 }] },
  { n: 25, h: 15, color: C, icon: "keys", name: "Kontakt 01" },
];
const rowH = { 15: "h-[15px]", 20: "h-5", 48: "h-12", 49: "h-[49px]" };
const barLines = [11, 79, 148, 217, 286, 354, 422, 491, 559, 628, 697, 765, 834];

function Letters({ items, on, sel, className = "" }) {
  return (
    <div className={"flex h-[19px] shrink-0 overflow-hidden rounded-xs border font-['Inter'] text-[13px] font-bold leading-none " + (sel ? "border-[#6b6c6d] bg-[#8c8e8e] text-[#242526] " : "border-[#17181a] bg-[#303133] text-[#bcbdbe] ") + className}>
      {items.map((l) => (
        <button key={l} aria-pressed={on === l} className={"flex flex-1 items-center justify-center " + (on === l ? "bg-[#cdc343] text-[#3a3812]" : "")}>
          {l}
        </button>
      ))}
    </div>
  );
}

function IconBox({ names, sel, className = "" }) {
  return (
    <div className={"flex h-[19px] shrink-0 rounded-xs border " + (sel ? "border-[#6b6c6d] bg-[#8c8e8e] text-[#242526] " : "border-[#17181a] bg-[#303133] text-[#bcbdbe] ") + className}>
      {names.map((n) => (
        <button key={n} aria-label={n} className="flex flex-1 items-center justify-center">
          <Icon n={n} size={n === "fader" || n === "e" || n === "circle" ? 13 : 14} w={n === "e" ? 4 : n === "circle" ? 3 : 2} />
        </button>
      ))}
    </div>
  );
}

const nameFont = "whitespace-nowrap font-['Liberation_Sans','Noto_Sans_CJK_SC',sans-serif] text-sm leading-none [text-shadow:0_0_1px_currentColor]";

function SpecialBody({ t }) {
  if (t.kind === "io") return <span className="pl-[11px] pt-1 text-xs font-bold leading-none text-[#d4d5d6]">{t.name}</span>;
  if (t.kind === "chord")
    return (
      <div className="flex items-center pl-[5px]">
        <button aria-label="静音和弦轨" className="h-full w-[25px] bg-[#cdc343] font-['Inter'] text-[13px] font-bold leading-none text-[#3a3812]">M</button>
        <span className={"pl-[38px] text-[#e8e9ea] " + nameFont}>{t.name}</span>
      </div>
    );
  if (t.kind === "transpose")
    return (
      <div className="flex items-center pl-[5px]">
        <button aria-label="静音移调轨" className="h-full w-[26px] bg-[#303133] font-['Inter'] text-[13px] font-bold leading-none text-[#bcbdbe]">M</button>
        <button aria-label="锁定" className="flex h-full w-[26px] items-center justify-center bg-[#303133] text-[#bcbdbe]">
          <svg viewBox="0 0 24 24" width="14" height="13"><path d="M2 12h14v11H2z" fill="currentColor" /><path d="M13 12V7c0-5 8-5 8 0v4" fill="none" stroke="currentColor" strokeWidth="3" /></svg>
        </button>
        <button aria-label="移调方向" className="ml-2 flex h-3 w-[25px] items-center justify-center self-end bg-[#d2d3d3] text-[#222]">
          <svg viewBox="0 0 24 12" width="22" height="11"><path d="M3 8h3v3H3zM18 8h3v3h-3zM9 4l3-3 3 3zM9 7h6l-3 4z" fill="currentColor" /></svg>
        </button>
        <button aria-label="移调音符" className="flex h-3 w-[26px] items-center justify-center self-end bg-[#c3905c] text-[#2b1c0d]">
          <svg viewBox="0 0 24 12" width="22" height="11"><ellipse cx="11" cy="8" rx="4" ry="3" fill="currentColor" /><path d="M14 0v8" stroke="currentColor" strokeWidth="2" /></svg>
        </button>
      </div>
    );
  return (
    <div className="flex flex-col pl-[5px] pt-[3px]">
      <div className="flex h-[19px] items-center">
        <div className="flex h-[19px] w-[52px] items-center justify-evenly rounded-xs border border-[#17181a] bg-[#303133] text-[#b4b5b6]">
          <button aria-label="添加标记"><svg viewBox="0 0 24 24" width="14" height="14"><path d="M1 2h13L8 11v11H7V11zM13 15h10v2H13zM17 11h2v10h-2z" fill="currentColor" /></svg></button>
          <button aria-label="添加循环标记"><svg viewBox="0 0 32 24" width="18" height="14"><path d="M0 2h11L6 10v12H5V10zM11 2h11l-5 8v12h-1V10zM20 14h11v2H20zM24 10h2v10h-2z" fill="currentColor" /></svg></button>
        </div>
        <span className={"pl-[11px] text-[#e8e9ea] " + nameFont}>{t.name}</span>
      </div>
      <div className="ml-[60px] mt-[3px] flex gap-[3px]">
        {["定位", "循环", "缩放"].map((l) => (
          <Select key={l} label={l} value={l} tight className="h-[19px] w-[57px] rounded-xs border border-[#17181a] bg-[#2b2c2e] text-[11px] italic text-[#9fa0a1]" pad="pl-1" />
        ))}
      </div>
    </div>
  );
}

function TrackBody({ t }) {
  const sel = t.selected;
  const nm = (sel ? "text-[#242526] " : "text-[#e4e5e6] ") + nameFont;
  if (t.h < 40)
    return (
      <div className="flex items-center pl-[5px]">
        <Letters items={["M", "S"]} on={t.mute ? "M" : null} className="w-[52px]" />
        <span className={"pl-[11px] " + nm}>{t.name}</span>
      </div>
    );
  return (
    <div className="flex flex-col pl-[5px] pt-[3px]">
      <div className="flex h-[19px] items-center">
        <Letters items={["M", "S"]} on={t.mute ? "M" : null} sel={sel} className="w-[52px]" />
        <span className={"pl-[11px] " + nm}>{t.name}</span>
      </div>
      <div className="mt-[3px] flex items-start gap-0.5">
        <span className={"ml-0.5 mr-9 mt-[3px] h-5 w-5 shrink-0 rounded-xs border " + (sel ? "border-[#6b6c6d] bg-[#a0a2a1]" : "border-[#1d1e20]")} />
        <Letters items={["R", "W"]} sel={sel} className="mr-px w-[51px]" />
        {t.audio ? (
          <>
            <IconBox names={["e", "circle"]} className="w-[51px]" />
            <IconBox names={["insert", "fader", "send"]} className="w-[77px]" />
          </>
        ) : (
          <>
            <IconBox names={["e"]} sel={sel} className="w-[23px]" />
            <div className={"flex h-[19px] w-[53px] shrink-0 items-center rounded-xs border text-[11px] " + (sel ? "border-[#6b6c6d] bg-[#929494] text-[#3a3b3c]" : "border-[#17181a] bg-[#232426] text-[#a8a9aa]")}>
              <Icon n="midi" size={12} className="ml-[3px]" />
              <Select label={t.name + " MIDI 通道"} value={String(t.ch)} tight className="h-full flex-1" pad="pl-1" />
            </div>
            <IconBox names={["insert", "send"]} sel={sel} className="w-[51px]" />
          </>
        )}
      </div>
    </div>
  );
}

function Meter({ t }) {
  const line = t.hot ? "bg-[#e0a020]" : t.pale ? "bg-[#9ed8b8]" : "bg-[#2fd883]";
  return (
    <div className="flex w-3 shrink-0 flex-col justify-between bg-[#060707] px-px">
      <div style={{ paddingTop: t.peak || 0 }}>{t.peak && <div className={"h-px " + line} />}</div>
      {t.bar && (
        <div className="flex gap-px" style={{ height: t.bar }}>
          <span className="flex-1 bg-gradient-to-b from-[#2fe8a8] to-[#22c8f0]" />
          {t.audio && <span className="flex-1 bg-gradient-to-b from-[#2fe8a8] to-[#22c8f0]" />}
        </div>
      )}
    </div>
  );
}

function TrackRow({ t }) {
  return (
    <li className={"flex overflow-hidden " + rowH[t.h]}>
      <div className={"flex w-[43px] shrink-0 items-start justify-between overflow-hidden border-b border-[#17181a] pl-1 pr-1 text-[#141618] " + heads[t.color]}>
        <span className={t.kind === "io" ? "pt-[3px]" : "pt-[5px]"}>
          {t.kind === "marker" ? (
            <svg viewBox="0 0 16 16" width="15" height="15"><path d="M5 0h6L8 4zM7 5h2v2H7zM7 9h2v2H7zM2 13h12v2H2z" fill="currentColor" /></svg>
          ) : (
            <Icon n={t.icon || "midi"} size={15} />
          )}
        </span>
        <span className="pt-1.5 text-xs leading-none">{t.n}</span>
      </div>
      <div className={"flex min-w-0 flex-1 overflow-hidden border-b border-black " + (t.selected ? "bg-[#9b9d9c]" : "bg-[#27282b]")}>
        {t.kind ? <SpecialBody t={t} /> : <TrackBody t={t} />}
      </div>
      <Meter t={t} />
    </li>
  );
}

function TrackList() {
  return (
    <section className="flex w-[382px] shrink-0 flex-col">
      <div className="mb-px mr-px flex h-[26px] shrink-0 items-start border-b border-[#515254] text-[#d4d5d6]">
        <div className="flex h-5 w-[53px] items-center justify-around rounded-xs bg-[#38393b]">
          <button aria-label="添加轨道"><Icon n="plus" size={14} w={4} /></button>
          <button aria-label="轨道预设"><Icon n="hexlist" size={17} /></button>
        </div>
        <span className="ml-auto h-5 w-[66px] rounded-xs bg-[#3e3f42] pl-[5px] text-[11px] leading-5 text-[#c8c9ca]">30 / 30</span>
        <button aria-label="可见性" className="flex h-5 w-[26px] items-center justify-center bg-[#18191b]"><Icon n="house" size={16} w={2.5} /></button>
        <button aria-label="分割轨道列表" className="ml-px flex h-5 w-[26px] items-center justify-center bg-[#18191b]"><Icon n="rows" size={16} w={3} /></button>
        <button aria-label="查找轨道" className="ml-3 mr-0.5 flex h-5 w-[26px] items-center justify-center rounded-xs bg-[#38393b]"><Icon n="search" size={16} w={2.5} /></button>
      </div>
      <ul className="mr-px min-h-0 shrink-0">
        {tracks.map((t, i) => (
          <TrackRow key={i} t={t} />
        ))}
      </ul>
      <div className="mt-auto flex h-4 items-center justify-between pl-2 pr-1.5 text-[13px] leading-none text-[#a9aaab]">
        Mixing
        <span className="flex items-center gap-3 text-[#77787a]">
          <button aria-label="配置菜单"><svg viewBox="0 0 12 7" width="10" height="6"><path d="M0 0h12L6 7z" fill="currentColor" /></svg></button>
          <button aria-label="轨道设置"><svg viewBox="0 0 24 24" width="13" height="13"><circle cx="12" cy="12" r="6" fill="none" stroke="currentColor" strokeWidth="4" /><path d="M12 0v5M12 19v5M1.600 6l4.300 2.500M18 15.500l4.400 2.500M1.600 18l4.300-2.500M18 8.500L22.400 6" stroke="currentColor" strokeWidth="4" /></svg></button>
        </span>
      </div>
    </section>
  );
}

/* ---------- arrangement ---------- */
const chords = [["E", "min⁷", 12, 34], ["A", "min/", 46, 33], ["F", "", 80, 11], ["G", "", 114, 13], ["A", "min", 149, 29], ["A", "min", 218, 29], ["G", "", 251, 13], ["E", "min⁷", 287, 34], ["A", "min/", 321, 33], ["D", "/F#", 355, 26], ["G", "/D", 389, 26], ["E", "", 423, 11], ["A", "n", 475, 16], ["A", "min", 492, 29], ["G", "", 525, 13], ["E", "min⁷", 560, 34], ["A", "min/", 595, 34], ["F", "", 629, 11], ["G", "", 663, 13], ["C", "maj⁷", 714, 37]];

function Clip({ c, color, top, h }) {
  const [box, ink] = clipLook[color];
  const w = c.b - c.a;
  const H = h - (h < 40 ? 3 : 2);
  return (
    <div className={"absolute top-px overflow-hidden " + box} style={{ left: c.a, width: w, height: H }}>
      <svg viewBox={`${c.a} ${top + 1} ${w} ${H}`} width={w} height={H} className={"max-w-none " + (color === G ? "-m-0.5" : "-m-px")}>
        {barLines.map((x) => (
          <path key={x} d={`M${x + 0.5} ${top}v${h}`} stroke={ink} strokeWidth="1" opacity="0.45" />
        ))}
        {c.hatch && Array.from({ length: 60 }, (_, i) => (
          <path key={i} d={`M${c.a - 40 + i * 10} ${top + 3}l44 44`} stroke={ink} strokeWidth="3" opacity="0.22" />
        ))}
        {c.wave && [489, 552].map((m) => (
          <polygon key={m} transform={UPPER} points={waveform(m)} fill="#4a4b4c" stroke="#161718" strokeWidth="3" />
        ))}
        {c.notes && (
          <g transform={c.view}>
            {(c.cc || []).map((k, i) => (
              <path key={i} d={strokesOf(k)} stroke="#6a6b6d" strokeWidth="1.500" />
            ))}
            {c.notes.map(([a, b, y], i) => (
              <rect key={i} x={a} y={y - c.t / 2} width={b - a} height={c.t} fill={ink} />
            ))}
          </g>
        )}
      </svg>
      {c.label && (
        <span className={"absolute left-1 top-1 whitespace-nowrap pr-1 font-['Liberation_Sans'] text-xs leading-none text-[#101113] " + (c.hatch ? "bg-[#5b80e4]" : "")}>{c.label}</span>
      )}
    </div>
  );
}

function Arrange() {
  let y = 0;
  return (
    <div className="relative min-h-0 flex-1 overflow-hidden bg-[#262e37]">
      {barLines.map((x) => (
        <span key={x} className="absolute inset-y-0 w-px bg-[#7b8084]" style={{ left: x }} />
      ))}
      {tracks.map((t, i) => {
        const top = y;
        y += t.h;
        return (
          <div key={i} className={"relative overflow-hidden border-b border-[#3a444d] " + rowH[t.h]}>
            {t.kind === "chord" && chords.map(([root, rest, x, w], k) => (
              <span key={k} className="absolute top-0.5 h-5 overflow-hidden whitespace-nowrap border border-[#b9babb] bg-[#929395] pl-px font-['Liberation_Sans'] text-[13px] leading-4 text-[#333435]" style={{ left: x, width: w }}>{root}<span className="text-[11px]">{rest}</span></span>
            ))}
            {t.kind === "marker" && (
              <svg viewBox="0 0 21 16" width="21" height="16" className="absolute left-[217px] top-[29px]"><path d="M0 0h6l15 16H0z" fill="#8b8d8f" /></svg>
            )}
            {(t.clips || []).map((c, k) => (
              <Clip key={k} c={c} color={t.color} top={top} h={t.h} />
            ))}
          </div>
        );
      })}
    </div>
  );
}

const sbtn = "flex shrink-0 items-center justify-center bg-[#434446] text-[#e4e5e6]";

function Timeline() {
  return (
    <section className="flex min-w-0 flex-1">
      <div className="relative flex min-w-0 flex-1 flex-col">
        <div className="relative mb-0.5 mr-[5px] h-[25px] shrink-0 overflow-hidden bg-[#6f5bdb]">
          {barLines.map((x, i) => (
            <span key={x} className="absolute inset-y-0 border-l border-[#e6e2ff] pl-1 pt-2.5 text-[13px] font-bold leading-none text-[#f2f0ff]" style={{ left: x }}>{63 + i * 2}</span>
          ))}
        </div>
        <Arrange />
        <div className="pointer-events-none absolute bottom-3 left-[271px] top-0 w-[3px] border-l-2 border-black bg-[#dfe0e0]" />
        <svg viewBox="0 0 12 20" width="12" height="20" className="absolute bottom-4 left-[273px]" aria-hidden="true"><path d="M0 0l11.500 12H7l3 6-3 1-2.500-6L0 17z" fill="#fff" /></svg>
        <div className="flex h-3 shrink-0 items-center gap-1">
          <div className="flex h-full flex-1 items-center justify-between bg-[#434446] px-1 text-[#e4e5e6]">
            <button aria-label="向左滚动"><Icon n="left" size={9} /></button>
            <div className="flex-1 px-[22%]"><span className="ml-[10%] block h-2.5 w-[74px] rounded-xs bg-[#f2f2f2]" /></div>
            <button aria-label="向右滚动"><Icon n="right" size={9} /></button>
          </div>
          <button aria-label="缩放预设" className={"h-full w-3 " + sbtn}><Tri /></button>
          <div className="flex h-full w-[90px] items-center gap-1 bg-[#434446] px-1 text-[#f2f2f2]">
            <button aria-label="水平缩小"><Icon n="minus" size={9} w={5} /></button>
            <span className="relative h-0.5 flex-1 bg-[#77787a]"><span className="absolute -top-[3px] left-[28%] h-2 w-2 rounded-full bg-white" /></span>
            <button aria-label="水平放大"><Icon n="plus" size={9} w={5} /></button>
          </div>
        </div>
      </div>
      <div className="flex w-3 shrink-0 flex-col">
        <button aria-label="时间标尺选项" className={"h-[23px] rounded-xs " + sbtn}><Tri /></button>
        <button aria-label="编辑标尺" className={"mt-[3px] h-[13px] " + sbtn}><Icon n="line" size={9} w={5} /></button>
        <div className="mt-[3px] flex h-[50px] flex-col items-center bg-[#434446] pb-px pt-1">
          <span className="w-0.5 flex-1 bg-[#66676a]" /><span className="h-2 w-2 rounded-full bg-white" />
        </div>
        <div className="mt-[3px] flex min-h-0 flex-1 flex-col items-center bg-[#434446] text-[#e4e5e6]">
          <button aria-label="向上滚动" className="flex h-[19px] items-center"><Icon n="up" size={8} /></button>
          <span className="w-2 flex-1 rounded-xs bg-[#f0f0f0]" />
          <button aria-label="向下滚动" className="mt-6 flex h-[17px] items-center"><Icon n="down" size={8} /></button>
        </div>
        <button aria-label="垂直缩放预设" className={"mt-[3px] h-[13px] " + sbtn}><Tri /></button>
        <div className="mb-3 mt-[3px] flex h-[88px] shrink-0 flex-col items-center bg-[#434446] py-1 text-[#f2f2f2]">
          <button aria-label="垂直缩小"><Icon n="minus" size={8} w={5} className="block" /></button>
          <span className="mt-0.5 h-2 w-2 rounded-full bg-white" />
          <span className="w-0.5 flex-1 bg-[#77787a]" />
          <button aria-label="垂直放大"><Icon n="plus" size={8} w={5} className="block" /></button>
        </div>
      </div>
    </section>
  );
}

function Project() {
  return (
    <main className="flex min-w-0 flex-1 rounded-lg border-2 border-[#f0eef0] bg-[#27282b] pb-1 pl-1 pr-1.5 pt-1">
      <TrackList />
      <div className="flex w-[3px] shrink-0 flex-col items-center justify-center gap-[3px] bg-[#76787a]">
        {[0, 1, 2, 3].map((i) => (
          <span key={i} className="h-1 w-[3px] bg-[#e4e5e6]" />
        ))}
      </div>
      <Timeline />
    </main>
  );
}

/* ---------- media ---------- */
const media = [
  ["VST 乐器", <path key="a" fill="currentColor" d="M16 14h8v25h5v20H18a3 3 0 0 1-3-3V15zM35 14h6a1 1 0 0 1 1 1v24h3v18a2 2 0 0 1-2 2H33a2 2 0 0 1-2-2V39h3V15zM53 14h6a3 3 0 0 1 2 3v40a2 2 0 0 1-2 2H48V39h4V15z" />],
  ["VST 效果", null],
  ["Loop & 采样", <g key="c"><path d="M27 19h12a18 18 0 1 1-18 19" fill="none" stroke="currentColor" strokeWidth="8" /><path d="M20 15h9v8zM12 40l9-13 9 13z" fill="currentColor" /></g>],
  ["预置", <g key="d" fill="currentColor"><path d="M18 16h17l8 14-8 14H18l-8-14z" /><path d="M45 36h14l6 11-6 11H45l-6-11z" /></g>],
  ["用户预置", <g key="e"><path d="M20 15h18l9 15-9 16H20l-8-16z" fill="currentColor" /><path d="M33 58c-1-10 3-14 12-14s13 4 12 14c-6 3-18 3-24 0z" fill="currentColor" stroke="#a8a9ab" strokeWidth="2" /><circle cx="45" cy="36" r="9" fill="currentColor" stroke="#a8a9ab" strokeWidth="3" /></g>],
  ["文件浏览器", <g key="f"><rect x="10" y="22" width="56" height="20" rx="3" fill="currentColor" /><circle cx="50" cy="32" r="2.500" fill="#a8a9ab" /><circle cx="58" cy="32" r="2.500" fill="#a8a9ab" /><circle cx="30" cy="44" r="13" fill="#a8a9ab" /><circle cx="30" cy="44" r="8" fill="none" stroke="currentColor" strokeWidth="4" /><path d="M36 50l8 8" stroke="currentColor" strokeWidth="4" strokeLinecap="round" /></g>],
  ["收藏夹", <path key="g" d="M38 14l7 16 17 1-13 11 5 17-16-9-16 9 5-17-13-11 17-1z" fill="currentColor" stroke="currentColor" strokeWidth="2" strokeLinejoin="round" />],
];

function MediaPanel() {
  return (
    <aside className="flex w-[243px] shrink-0 flex-col">
      <div className="flex h-[23px] shrink-0 items-start text-sm font-bold leading-none text-[#d8d9da]">
        <button className="h-6 w-[59px] pb-0.5">VSTi</button>
        <button className="relative z-10 h-[25px] w-[62px] rounded-t-xs border-2 border-b-0 border-[#58595b] bg-[#27282b] pb-1 text-[13px] text-[#f0f0f0]">媒体</button>
        <button className="h-6 w-[51px] pb-0.5">CR</button>
        <button className="h-6 flex-1 pb-0.5 text-[13px]">电平表</button>
      </div>
      <div className="min-h-0 flex-1 rounded-md border-2 border-[#58595b] bg-[#27282b] px-[7px] pt-[7px] text-[#d4d5d6]">
        <div className="flex h-[22px] items-center">
          <label className="flex h-full min-w-0 flex-1 items-center gap-1 rounded border border-[#48494b] bg-[#161719] px-1">
            <Icon n="search" size={14} w={2.5} />
            <input type="search" aria-label="搜索" placeholder="搜索" className="w-full min-w-0 bg-transparent text-[11px] italic outline-none placeholder:text-[#8f9091]" />
          </label>
          <button aria-label="清除" className="flex w-[25px] justify-center text-[#66676a]"><Icon n="cross" size={12} w={4} /></button>
          <button aria-label="列表" className="flex h-[22px] w-[27px] items-center justify-center rounded-xs border border-[#5b5c5e] bg-[#3a3b3d] text-white">
            <svg viewBox="0 0 16 14" width="15" height="13"><path d="M0 1h2v2H0zM4 1h12v2H4zM0 6h2v2H0zM4 6h12v2H4zM0 11h2v2H0zM4 11h12v2H4z" fill="currentColor" /></svg>
          </button>
        </div>
        <div className="mt-[5px] flex h-[27px] items-start gap-0.5 border-b-2 border-[#66676a]">
          <button aria-label="返回" className="flex h-[21px] w-[22px] items-center justify-center rounded-xs bg-[#2f3033] text-[#77787a]"><Icon n="back" size={13} w={2.5} /></button>
          <button aria-label="主页" className="flex h-[21px] w-[22px] items-center justify-center"><Icon n="home" size={17} /></button>
        </div>
        <ul className="-ml-1 grid grid-cols-2 gap-y-[30px] pt-[38px]">
          {media.map(([name, art]) => (
            <li key={name}>
              <button className="flex w-full flex-col items-center leading-none text-[#e0e1e2]">
                <span className="flex h-[75px] w-[75px] items-center justify-center rounded bg-[#a8a9ab] text-[#27282b]">
                  {art ? <svg viewBox="0 0 75 75" width="75" height="75">{art}</svg> : <span className="font-['Inter'] text-[42px] font-bold">FX</span>}
                </span>
                <span className="mt-3.5 whitespace-nowrap text-xs leading-3">{name}</span>
              </button>
            </li>
          ))}
        </ul>
      </div>
    </aside>
  );
}

/* ---------- transport ---------- */
const Dots = () => (
  <span className="flex w-1 shrink-0 flex-col gap-1 pt-1">
    {[0, 1, 2].map((i) => <span key={i} className="h-[3px] w-[3px] bg-[#b4b5b6]" />)}
  </span>
);
function TPair({ children, label }) {
  return (
    <Group dark>
      <button aria-label={label} className="flex w-[26px] items-center justify-center">{children}</button>
      <button aria-label={label + "选项"} className="flex w-[18px] items-center justify-center"><Tri /></button>
    </Group>
  );
}
function TimeBox({ label, value, children }) {
  return (
    <Group dark className="w-[158px]">
      <span className="flex w-[26px] items-center justify-center bg-[#343537]">{children}</span>
      <input aria-label={label} defaultValue={value} className="min-w-0 flex-1 bg-transparent pr-1.5 text-right text-base text-[#dcdddd] outline-none" />
    </Group>
  );
}
const key = "flex h-[23px] w-[52px] items-center justify-center ";

function Transport() {
  return (
    <footer className="flex h-[21px] shrink-0 items-start gap-1 overflow-hidden bg-[#27282b] px-1 pt-2 text-[#c8c9ca]">
      <Group className="mr-0.5"><Tool label="节拍器"><svg viewBox="0 0 24 24" width="20" height="20"><circle cx="12" cy="12" r="9" fill="none" stroke="currentColor" strokeWidth="2.500" /><path d="M12 4v16M8 8l-3 8M16 8l3 8" stroke="currentColor" strokeWidth="2.500" /></svg></Tool></Group>
      <TPair label="录音模式"><span className="h-3 w-3 rounded-full bg-[#c8c9ca]" /></TPair><Dots />
      <TPair label="音频录音"><Icon n="wave" size={18} /></TPair><Dots />
      <TPair label="MIDI 录音"><Icon n="midi" size={18} /></TPair><Dots />
      <Group className="ml-0.5"><button aria-label="插入点" className="flex w-[38px] items-center justify-center"><svg viewBox="0 0 30 16" width="26" height="15"><path d="M3 14L9 3l6 11zM27 9a5 5 0 1 1-10 0a5 5 0 0 1 10 0" fill="none" stroke="currentColor" strokeWidth="2" /></svg></button></Group>
      <span className="w-[148px] shrink-0" />
      <TimeBox label="左定位点" value="0:00:00.000"><svg viewBox="0 0 12 12" width="10" height="10"><path d="M0 0h12L0 12z" fill="currentColor" /></svg></TimeBox>
      <span className="w-1 shrink-0" />
      <TimeBox label="右定位点" value="0:04:42.333"><svg viewBox="0 0 12 12" width="10" height="10"><path d="M0 0h12v12z" fill="currentColor" /></svg></TimeBox>
      <Group className="ml-0.5">
        <Tool label="锁定" on><svg viewBox="0 0 24 24" width="18" height="18"><path d="M4 11h16v11H4z" fill="currentColor" /><path d="M8 11V7c0-5 8-5 8 0v4" fill="none" stroke="currentColor" strokeWidth="3" /></svg></Tool>
        <span className="flex w-[26px] items-center justify-center"><Tri /></span>
        <span className="flex w-[26px] justify-center"><Dots /></span>
      </Group>
      <Dots />
      <div className="flex shrink-0 overflow-hidden rounded border-2 border-[#a9aaab] text-[#1b1c1e]">
        <button aria-label="循环" className={key + "bg-[#8672e0]"}><Icon n="redo" size={18} w={2.5} /></button>
        <button aria-label="停止" className={key + "bg-[#67686a]"}><span className="h-3 w-3 border-2 border-current" /></button>
        <button aria-label="播放" className={key + "bg-[#35d93c]"}><svg viewBox="0 0 16 16" width="16" height="16"><path d="M3 1l11 7-11 7z" fill="none" stroke="currentColor" strokeWidth="2" /></svg></button>
        <button aria-label="录音" className={key + "bg-[#67686a]"}><span className="h-3.5 w-3.5 rounded-full border-2 border-current" /></button>
      </div>
      <Dots />
      <Group><button aria-label="预卷" className="flex w-[38px] items-center justify-center text-[#77787a]"><Icon n="redo" size={18} /></button></Group>
      <TimeBox label="当前时间" value="0:03:05.626"><svg viewBox="0 0 24 24" width="16" height="16"><circle cx="12" cy="12" r="11" fill="currentColor" /><path d="M12 5v7h5" stroke="#343537" strokeWidth="3" fill="none" /></svg></TimeBox>
      <Dots />
      <Group dark>
        <Tool label="速度轨" on><svg viewBox="0 0 24 24" width="18" height="18"><path d="M8 2v18M16 4v18M4 16h4M16 8h4" stroke="currentColor" strokeWidth="3" /></svg></Tool>
        <input aria-label="速度" defaultValue="90.000" className="w-[64px] bg-transparent pr-1.5 text-right text-sm text-[#9a9b9c] outline-none" />
        <span className="flex w-[22px] items-center justify-center"><Icon n="up" size={10} /></span>
        <button className="w-[52px] bg-[#343537] text-sm text-[#9a9b9c]">Tap</button>
        <span className="flex w-[26px] items-center justify-center"><Tri /></span>
      </Group>
      <Dots />
      <span className="flex-1" />
      <Group><Tool label="编辑器"><svg viewBox="0 0 24 24" width="16" height="16"><path d="M14 2h3v12h-3zM5 6h3v14H5z" fill="currentColor" /></svg></Tool><Tool n="e" label="工程设置" w={4} /></Group>
      <Group dark><button aria-label="更多" className="flex w-[26px] items-center justify-center"><Tri /></button></Group>
      <Group dark className="mr-2 w-10"><span /></Group>
      <span className="mt-2.5 h-1 w-4 bg-[#2fd8b0]" />
      <Dots />
      <span className="mr-1 mt-1"><Tri className="block rotate-90" /></span>
    </footer>
  );
}

export default function App() {
  return (
    <div className="flex h-screen flex-col overflow-hidden bg-[#0a0a0b] font-['Open_Sans','Noto_Sans_CJK_SC',sans-serif]">
      <MenuBar />
      <header className="h-[74px] shrink-0 bg-[#27282c] pt-1">
        <Toolbar />
        <InfoLine />
      </header>
      <div className="flex h-[42px] shrink-0 items-center justify-center bg-[#191a1c] pl-1.5 pt-0.5 text-xs text-[#a4a5a6]">无选择对象</div>
      <div className="flex min-h-0 flex-1 gap-[5px] pb-1 pl-[5px] pr-1 pt-[5px]">
        <ChannelStrip />
        <Inspector />
        <Project />
        <MediaPanel />
      </div>
      <Transport />
    </div>
  );
}
